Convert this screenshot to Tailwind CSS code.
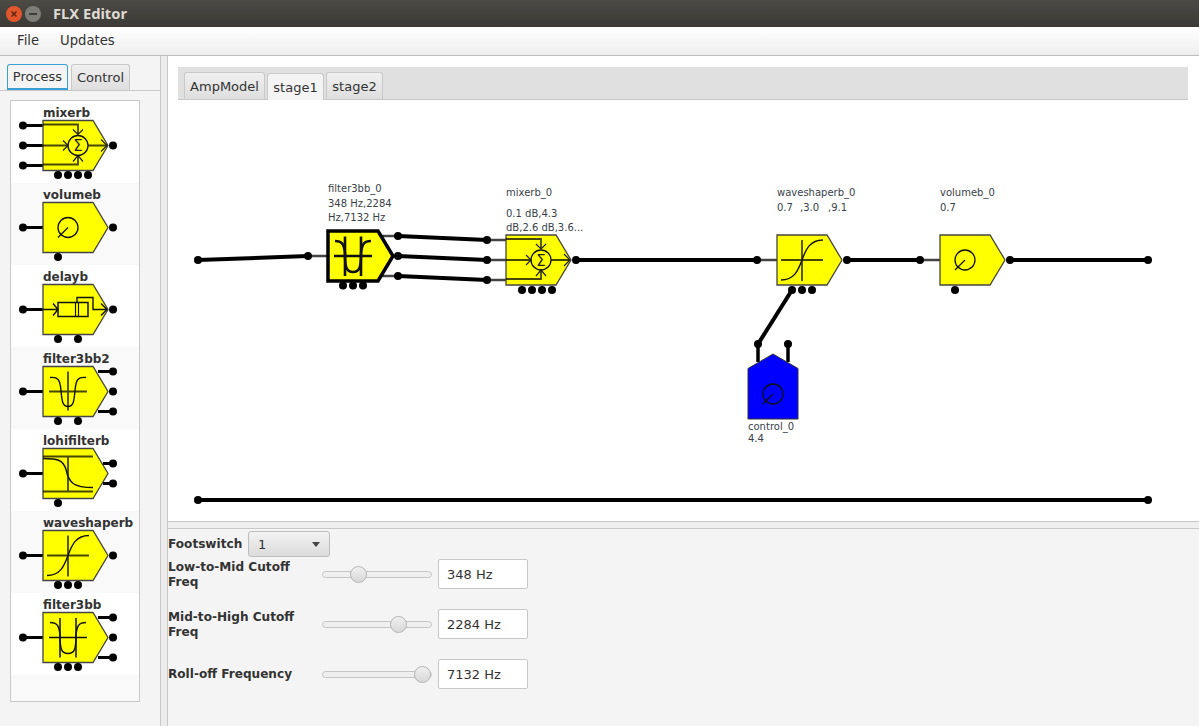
<!DOCTYPE html>
<html>
<head>
<meta charset="utf-8">
<title>FLX Editor</title>
<script src="https://cdn.jsdelivr.net/npm/@tailwindcss/browser@4"></script>
</head>
<body class="w-[1199px] h-[726px] overflow-hidden bg-[#f4f4f4] font-['DejaVu_Sans',sans-serif] text-[13px] text-[#333]">

<!-- shared block drawings -->
<svg class="absolute w-0 h-0">
  <defs>
    <polygon id="block" points="0,0 50,0 65,25 50,50 0,50" fill="#ffff00"/>
    <circle id="pin" r="4" fill="#000"/>
    <g id="dial" fill="none" stroke="#111" stroke-width="1.3">
      <circle cx="25" cy="25" r="10"/>
      <path d="M15 35 25 25"/>
    </g>
    <g id="mixer" fill="none">
      <path d="M0 4H35V14M0 44H35V35M0 25H25M45 25H64" stroke="#000" stroke-opacity=".72" stroke-width="1.8"/>
      <path d="M30 9 35 14 40 9M30 41 35 35 40 41M20 20 25 25 20 30M58 19 64 25 58 31" stroke="#222" stroke-width="1.2"/>
      <circle cx="35" cy="25" r="10" stroke="#111" stroke-width="1.3"/>
      <text x="35" y="30.5" text-anchor="middle" font-size="15" font-weight="400" fill="#222" stroke="none">Σ</text>
    </g>
    <g id="delay" fill="none" stroke="#111">
      <path d="M0 25H15M10 19 15 25 10 31M34 18V13H50V25H64M58 19 64 25 58 31" stroke-width="1.4"/>
      <rect x="15" y="18" width="30" height="14" stroke-width="1.5"/>
      <rect x="32.5" y="18" width="3" height="14" stroke-width="1.1"/>
    </g>
    <g id="bandpass" fill="none">
      <path d="M6 25H44M25 5V44" stroke="#000" stroke-opacity=".72" stroke-width="1.8"/>
      <path d="M7 11C15 10 17 13 18 24C19 36 20 40 25 40C30 40 31 36 32 24C33 13 35 10 43 11" stroke="#111" stroke-width="1.4"/>
    </g>
    <g id="lohi" fill="none">
      <path d="M0 8H50M0 43H50M25 8V43" stroke="#000" stroke-opacity=".72" stroke-width="1.8"/>
      <path d="M0 10C14 10 20 11 23 21C26 35 31 39 50 39" stroke="#111" stroke-width="1.4"/>
    </g>
    <g id="wave" fill="none">
      <path d="M4 25H46M25 5V46" stroke="#000" stroke-opacity=".72" stroke-width="1.8"/>
      <path d="M4 45C17 45 21 36 25 25C29 14 33 5 46 5" stroke="#111" stroke-width="1.4"/>
    </g>
    <!-- stroke width comes from the use, the selected block draws heavier -->
    <g id="band3" fill="none" stroke="#111">
      <path d="M6 25H44M17 5.500V45M33 5.500V45"/>
      <path d="M7 10C14 10 16 13 17 22C17 36 18 41 25 41C32 41 33 36 33 22C34 13 36 10 43 10"/>
    </g>
  </defs>
</svg>

<header class="h-[27px] flex items-center bg-gradient-to-b from-[#4c4a45] to-[#3b3a36]">
  <div class="w-4 h-4 ml-[6px] rounded-full bg-[#e2562c] flex items-center justify-center">
    <svg width="8" height="8" viewBox="0 0 8 8"><path d="M1.500 1.500 6.500 6.500M6.500 1.500 1.500 6.500" stroke="#5c2010" stroke-width="1.400"/></svg>
  </div>
  <div class="w-4 h-4 ml-[3px] rounded-full bg-[#7e7d78] flex items-center justify-center">
    <div class="w-2 h-[2px] bg-[#3f3e3a]"></div>
  </div>
  <span class="ml-[12px] font-['Noto_Sans',sans-serif] font-bold text-[14.7px] text-[#dfdbd2]">FLX Editor</span>
</header>

<nav class="h-[29px] flex items-center gap-[21px] pl-[17px] bg-gradient-to-b from-white to-[#eeeeee] border-b border-[#bdbdbd] text-[13.2px]">
  <span>File</span>
  <span>Updates</span>
</nav>

<main class="flex h-[670px]">
  <!-- palette side -->
  <aside class="w-[161px] shrink-0 border-r border-[#c8c8c8]">
    <div class="h-[35px] flex items-end pl-[7px] gap-[3px] border-b border-[#c8c8c8]">
      <div class="w-[61px] h-[26px] pt-px flex items-center justify-center bg-[#f4f4f4] border border-b-2 border-[#3c9fd3] rounded-t-[3px]">Process</div>
      <div class="w-[59px] h-[26px] pt-px flex items-center justify-center bg-gradient-to-b from-[#f0f0f0] to-[#dedede] border border-b-0 border-[#c8c8c8] rounded-t-[3px]">Control</div>
    </div>
    <div class="w-[130px] h-[602px] ml-[10px] mt-[9px] border border-[#c8c8c8] bg-[#f9f9f9] font-bold text-[12px]">
      <div class="h-[82px] bg-white">
        <svg width="128" height="82" class="block">
          <text x="32" y="16" fill="#333">mixerb</text>
          <g transform="translate(32,19.500)">
            <path d="M-20 5H0M-20 25H0M-20 45H0" stroke="#000" stroke-width="3"/>
            <use href="#block" stroke="#444" stroke-width="1.300"/><use href="#mixer"/>
            <use href="#pin" x="-20" y="5"/><use href="#pin" x="-20" y="25"/><use href="#pin" x="-20" y="45"/><use href="#pin" x="70" y="25"/>
            <use href="#pin" x="15" y="54.500"/><use href="#pin" x="25" y="54.500"/><use href="#pin" x="35" y="54.500"/><use href="#pin" x="45" y="54.500"/>
          </g>
        </svg>
      </div>
      <div class="h-[82px] bg-[#f9f9f9]">
        <svg width="128" height="82" class="block">
          <text x="32" y="16" fill="#333">volumeb</text>
          <g transform="translate(32,19.500)">
            <path d="M-20 25H0" stroke="#000" stroke-width="3"/>
            <use href="#block" stroke="#444" stroke-width="1.300"/><use href="#dial"/>
            <use href="#pin" x="-20" y="25"/><use href="#pin" x="70" y="25"/><use href="#pin" x="15" y="54.500"/>
          </g>
        </svg>
      </div>
      <div class="h-[82px] bg-white">
        <svg width="128" height="82" class="block">
          <text x="32" y="16" fill="#333">delayb</text>
          <g transform="translate(32,19.500)">
            <path d="M-20 25H0" stroke="#000" stroke-width="3"/>
            <use href="#block" stroke="#444" stroke-width="1.300"/><use href="#delay"/>
            <use href="#pin" x="-20" y="25"/><use href="#pin" x="70" y="25"/><use href="#pin" x="15" y="54.500"/><use href="#pin" x="35" y="54.500"/>
          </g>
        </svg>
      </div>
      <div class="h-[82px] bg-[#f9f9f9]">
        <svg width="128" height="82" class="block">
          <text x="32" y="16" fill="#333">filter3bb2</text>
          <g transform="translate(32,19.500)">
            <path d="M-20 25H0M55 5H70M55 45H70" stroke="#000" stroke-width="3"/>
            <use href="#block" stroke="#444" stroke-width="1.300"/><use href="#bandpass"/>
            <use href="#pin" x="-20" y="25"/><use href="#pin" x="70" y="5"/><use href="#pin" x="70" y="25"/><use href="#pin" x="70" y="45"/>
            <use href="#pin" x="15" y="54.500"/><use href="#pin" x="35" y="54.500"/>
          </g>
        </svg>
      </div>
      <div class="h-[82px] bg-white">
        <svg width="128" height="82" class="block">
          <text x="32" y="16" fill="#333">lohifilterb</text>
          <g transform="translate(32,19.500)">
            <path d="M-20 25H0M60 15H70M60 35H70" stroke="#000" stroke-width="3"/>
            <use href="#block" stroke="#444" stroke-width="1.300"/><use href="#lohi"/>
            <use href="#pin" x="-20" y="25"/><use href="#pin" x="70" y="15"/><use href="#pin" x="70" y="35"/><use href="#pin" x="15" y="54.500"/>
          </g>
        </svg>
      </div>
      <div class="h-[82px] bg-[#f9f9f9]">
        <svg width="128" height="82" class="block">
          <text x="32" y="16" fill="#333">waveshaperb</text>
          <g transform="translate(32,19.500)">
            <path d="M-20 25H0" stroke="#000" stroke-width="3"/>
            <use href="#block" stroke="#444" stroke-width="1.300"/><use href="#wave"/>
            <use href="#pin" x="-20" y="25"/><use href="#pin" x="70" y="25"/>
            <use href="#pin" x="15" y="54.500"/><use href="#pin" x="25" y="54.500"/><use href="#pin" x="35" y="54.500"/>
          </g>
        </svg>
      </div>
      <div class="h-[82px] bg-white">
        <svg width="128" height="82" class="block">
          <text x="32" y="16" fill="#333">filter3bb</text>
          <g transform="translate(32,19.500)">
            <path d="M-20 25H0M55 5H70M55 45H70" stroke="#000" stroke-width="3"/>
            <use href="#block" stroke="#444" stroke-width="1.300"/><use href="#band3" stroke-width="1.500"/>
            <use href="#pin" x="-20" y="25"/><use href="#pin" x="70" y="5"/><use href="#pin" x="70" y="25"/><use href="#pin" x="70" y="45"/>
            <use href="#pin" x="15" y="54.500"/><use href="#pin" x="25" y="54.500"/><use href="#pin" x="35" y="54.500"/>
          </g>
        </svg>
      </div>
    </div>
  </aside>

  <!-- splitter -->
  <div class="w-[6px] shrink-0 bg-[#ececec]"></div>

  <section class="flex-1 flex flex-col border-l border-[#c8c8c8]">
    <div class="h-[465px] bg-white pt-[11px] px-[10px]">
      <div class="h-[33px] w-[1010px] flex items-end pl-[6px] gap-[2px] bg-[#e0e0e0] border-b border-[#c8c8c8]">
        <div class="w-[81px] h-[27px] pt-px flex items-center justify-center bg-gradient-to-b from-[#f0f0f0] to-[#dedede] border border-b-0 border-[#c8c8c8] rounded-t-[3px]">AmpModel</div>
        <div class="w-[57px] h-[27px] pt-px -mb-px flex items-center justify-center bg-[#f4f4f4] border border-b-0 border-[#c8c8c8] rounded-t-[3px]">stage1</div>
        <div class="w-[57px] h-[27px] pt-px flex items-center justify-center bg-gradient-to-b from-[#f0f0f0] to-[#dedede] border border-b-0 border-[#c8c8c8] rounded-t-[3px]">stage2</div>
      </div>

      <!-- signal chain canvas, coordinates are window pixels -->
      <svg width="1032" height="420" class="block -ml-[11px] text-[10px]" viewBox="167 100 1032 420">
        <g stroke="#000" stroke-width="4" fill="none">
          <path d="M198 260 308 256"/>
          <path d="M398 236 487 240M398 256 487 260M398 276 487 280"/>
          <path d="M576 260H757M847 260H920M1010 260H1148"/>
          <path d="M198 500H1148"/>
          <path d="M792 290 758 344"/>
          <path d="M758 344V362M788 344V362" stroke-width="3.500"/>
        </g>
        <path d="M308 256H328M382 236H398M392 256H398M382 276H398M487 240H506M487 260H506M487 280H506M757 260H777M920 260H940" stroke="#444" stroke-width="2.500"/>

        <g transform="translate(328,231)">
          <use href="#block" stroke="#000" stroke-width="3.500"/><use href="#band3" stroke-width="2.600"/>
          <use href="#pin" x="15" y="54.500"/><use href="#pin" x="25" y="54.500"/><use href="#pin" x="35" y="54.500"/>
        </g>
        <g transform="translate(506,235)">
          <use href="#block" stroke="#444" stroke-width="1.300"/><use href="#mixer"/>
          <use href="#pin" x="16" y="55"/><use href="#pin" x="26" y="55"/><use href="#pin" x="36" y="55"/><use href="#pin" x="46" y="55"/>
        </g>
        <g transform="translate(777,235)">
          <use href="#block" stroke="#444" stroke-width="1.300"/><use href="#wave"/>
          <use href="#pin" x="15" y="55"/><use href="#pin" x="25" y="55"/><use href="#pin" x="35" y="55"/>
        </g>
        <g transform="translate(940,235)">
          <use href="#block" stroke="#444" stroke-width="1.300"/><use href="#dial"/>
          <use href="#pin" x="15" y="55"/>
        </g>
        <polygon points="773,354 798,368.500 798,419 748,419 748,368.500" fill="#0000ff" stroke="#333" stroke-width="1"/>
        <g transform="translate(748,369)"><use href="#dial"/></g>

        <g fill="#000">
          <circle cx="198" cy="260" r="4"/><circle cx="308" cy="256" r="4"/>
          <circle cx="398" cy="236" r="4"/><circle cx="398" cy="256" r="4"/><circle cx="398" cy="276" r="4"/>
          <circle cx="487" cy="240" r="4"/><circle cx="487" cy="260" r="4"/><circle cx="487" cy="280" r="4"/>
          <circle cx="576" cy="260" r="4"/><circle cx="757" cy="260" r="4"/><circle cx="847" cy="260" r="4"/>
          <circle cx="920" cy="260" r="4"/><circle cx="1010" cy="260" r="4"/><circle cx="1148" cy="260" r="4"/>
          <circle cx="198" cy="500" r="4"/><circle cx="1148" cy="500" r="4"/>
          <circle cx="758" cy="344" r="4"/><circle cx="788" cy="344" r="4"/>
        </g>

        <g fill="#3a3f4a">
          <text x="328" y="192">filter3bb_0</text>
          <text x="328" y="207">348 Hz,2284</text>
          <text x="328" y="221">Hz,7132 Hz</text>
          <text x="506" y="196">mixerb_0</text>
          <text x="506" y="217">0.1 dB,4.3</text>
          <text x="506" y="231">dB,2.6 dB,3.6...</text>
          <text x="777" y="196">waveshaperb_0</text>
          <text x="777" y="211">0.7</text>
          <text x="800" y="211">,3.0</text>
          <text x="828" y="211">,9.1</text>
          <text x="940" y="196">volumeb_0</text>
          <text x="940" y="211">0.7</text>
          <text x="748" y="430">control_0</text>
          <text x="748" y="442">4.4</text>
        </g>
      </svg>
    </div>

    <!-- parameters -->
    <div class="h-[8px] bg-[#efefef] border-y border-[#c8c8c8]"></div>
    <div class="pt-[2px] font-bold text-[12.1px]">
      <div class="flex items-center h-[26px]">
        <span class="w-[80px] pt-px">Footswitch</span>
        <div class="w-[82px] h-[26px] pt-px flex items-center justify-between pl-[9px] pr-[9px] bg-gradient-to-b from-[#f2f2f2] to-[#dcdcdc] border border-[#bdbdbd] rounded-[3px] font-normal text-[13px]">
          <span>1</span>
          <div class="w-0 h-0 border-x-[4px] border-x-transparent border-t-[5px] border-t-[#444]"></div>
        </div>
      </div>
      <div class="flex flex-col gap-[20px] mt-[2px]">
        <div class="flex items-center h-[30px]">
          <span class="w-[154px] pt-px leading-[15px]">Low-to-Mid Cutoff<br>Freq</span>
          <div class="relative w-[110px] h-[7px] rounded-full bg-[#efefef] border border-[#c4c4c4]">
            <div class="absolute left-[27px] -top-[6px] w-[17px] h-[17px] rounded-full bg-gradient-to-b from-[#f0f0f0] to-[#d8d8d8] border border-[#b4b4b4]"></div>
          </div>
          <div class="w-[90px] h-[30px] ml-[6px] pt-px flex items-center pl-[8px] bg-white border border-[#c8c8c8] rounded-[2px] font-normal text-[13px]">348 Hz</div>
        </div>
        <div class="flex items-center h-[30px]">
          <span class="w-[154px] pt-px leading-[15px]">Mid-to-High Cutoff<br>Freq</span>
          <div class="relative w-[110px] h-[7px] rounded-full bg-[#efefef] border border-[#c4c4c4]">
            <div class="absolute left-[67px] -top-[6px] w-[17px] h-[17px] rounded-full bg-gradient-to-b from-[#f0f0f0] to-[#d8d8d8] border border-[#b4b4b4]"></div>
          </div>
          <div class="w-[90px] h-[30px] ml-[6px] pt-px flex items-center pl-[8px] bg-white border border-[#c8c8c8] rounded-[2px] font-normal text-[13px]">2284 Hz</div>
        </div>
        <div class="flex items-center h-[30px]">
          <span class="w-[154px] pt-px leading-[15px]">Roll-off Frequency</span>
          <div class="relative w-[110px] h-[7px] rounded-full bg-[#efefef] border border-[#c4c4c4]">
            <div class="absolute left-[91px] -top-[6px] w-[17px] h-[17px] rounded-full bg-gradient-to-b from-[#f0f0f0] to-[#d8d8d8] border border-[#b4b4b4]"></div>
          </div>
          <div class="w-[90px] h-[30px] ml-[6px] pt-px flex items-center pl-[8px] bg-white border border-[#c8c8c8] rounded-[2px] font-normal text-[13px]">7132 Hz</div>
        </div>
      </div>
    </div>
  </section>
</main>
</body>
</html>
